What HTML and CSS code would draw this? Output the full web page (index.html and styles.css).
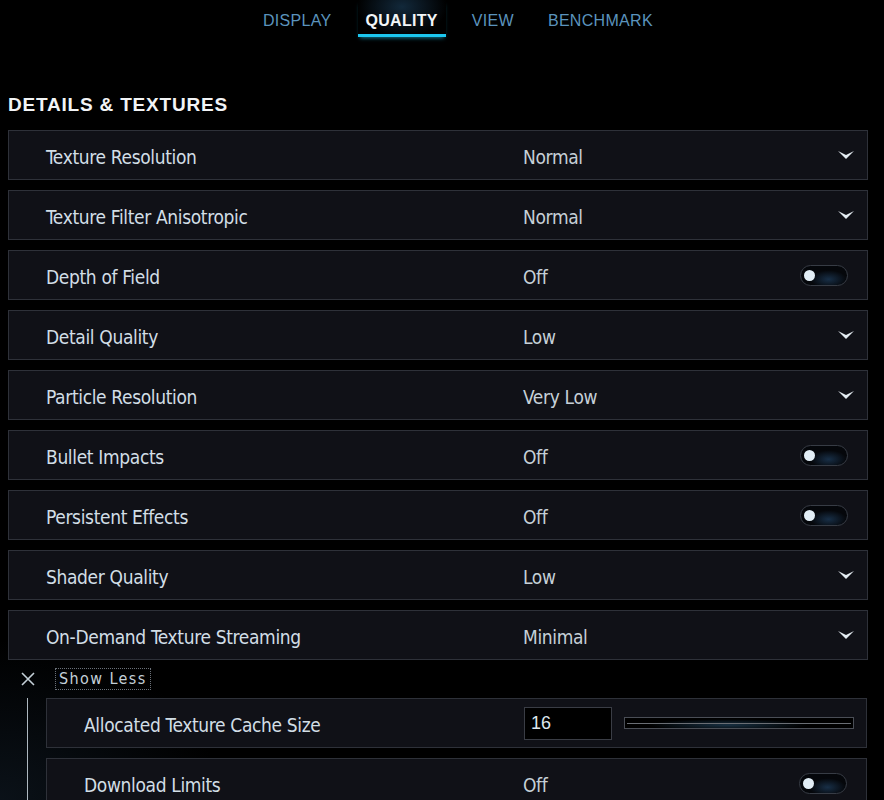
FILE: index.html
```html
<!DOCTYPE html>
<html>
<head>
<meta charset="utf-8">
<link rel="stylesheet" href="styles.css">
</head>
<body>
<div class="page">
  <nav class="tabs">
    <span class="tab">DISPLAY</span>
    <span class="tab active">QUALITY</span>
    <span class="tab">VIEW</span>
    <span class="tab">BENCHMARK</span>
  </nav>

  <h2 class="section-title">DETAILS &amp; TEXTURES</h2>

  <div class="rows">
    <div class="row"><span class="label">Texture Resolution</span><span class="value">Normal</span><span class="ctl"><svg class="chev" width="16" height="8" viewBox="0 0 16 8"><polygon points="0,0 8,4 16,0 8,8" fill="#e4ecf2"/></svg></span></div>
    <div class="row"><span class="label">Texture Filter Anisotropic</span><span class="value">Normal</span><span class="ctl"><svg class="chev" width="16" height="8" viewBox="0 0 16 8"><polygon points="0,0 8,4 16,0 8,8" fill="#e4ecf2"/></svg></span></div>
    <div class="row"><span class="label">Depth of Field</span><span class="value">Off</span><span class="ctl"><span class="toggle"><span class="knob"></span></span></span></div>
    <div class="row"><span class="label">Detail Quality</span><span class="value">Low</span><span class="ctl"><svg class="chev" width="16" height="8" viewBox="0 0 16 8"><polygon points="0,0 8,4 16,0 8,8" fill="#e4ecf2"/></svg></span></div>
    <div class="row"><span class="label">Particle Resolution</span><span class="value">Very Low</span><span class="ctl"><svg class="chev" width="16" height="8" viewBox="0 0 16 8"><polygon points="0,0 8,4 16,0 8,8" fill="#e4ecf2"/></svg></span></div>
    <div class="row"><span class="label">Bullet Impacts</span><span class="value">Off</span><span class="ctl"><span class="toggle"><span class="knob"></span></span></span></div>
    <div class="row"><span class="label">Persistent Effects</span><span class="value">Off</span><span class="ctl"><span class="toggle"><span class="knob"></span></span></span></div>
    <div class="row"><span class="label">Shader Quality</span><span class="value">Low</span><span class="ctl"><svg class="chev" width="16" height="8" viewBox="0 0 16 8"><polygon points="0,0 8,4 16,0 8,8" fill="#e4ecf2"/></svg></span></div>
    <div class="row"><span class="label">On-Demand Texture Streaming</span><span class="value">Minimal</span><span class="ctl"><svg class="chev" width="16" height="8" viewBox="0 0 16 8"><polygon points="0,0 8,4 16,0 8,8" fill="#e4ecf2"/></svg></span></div>
  </div>

  <div class="showless">
    <svg class="close" width="14" height="14" viewBox="0 0 14 14"><path d="M1 1 L13 13 M13 1 L1 13" stroke="#c4d0d8" stroke-width="1.6"/></svg>
    <span class="showless-text">Show Less</span>
  </div>

  <div class="subrows">
    <div class="row sub"><span class="label">Allocated Texture Cache Size</span><span class="value slider-cell"><span class="numbox">16</span><span class="slider"><span class="slider-line"></span></span></span></div>
    <div class="row sub"><span class="label">Download Limits</span><span class="value">Off</span><span class="ctl"><span class="toggle"><span class="knob"></span></span></span></div>
  </div>
</div>
</body>
</html>
```

FILE: styles.css
```css
html, body {
  margin: 0;
  padding: 0;
  background: #000;
  height: 800px;
  overflow: hidden;
}

.page {
  width: 884px;
  height: 800px;
  background:
    radial-gradient(ellipse 220px 160px at 0px 800px, rgba(30, 50, 70, 0.35), rgba(0,0,0,0) 100%),
    #000;
  font-family: "DejaVu Sans Condensed", "Liberation Sans", sans-serif;
  color: #ccd8e0;
}

.tabs {
  display: flex;
  gap: 18px;
  padding-left: 255px;
  height: 40px;
  font-family: "Liberation Sans", sans-serif;
  font-size: 16px;
}

.tab {
  color: #5b93bd;
  padding: 12px 8px 0;
  height: 22px;
  line-height: 18px;
  letter-spacing: 0.3px;
}

.tab.active {
  color: #f2f6f8;
  font-weight: bold;
  border-bottom: 3px solid #1cc6ee;
  box-shadow: 0 3px 4px -2px rgba(28, 198, 238, 0.6);
  background: radial-gradient(ellipse 45px 30px at 50% 20%, rgba(40, 90, 130, 0.45), rgba(0,0,0,0) 100%);
}

.section-title {
  margin: 53px 0 0 8px;
  height: 37px;
  font-family: "Liberation Sans", sans-serif;
  font-size: 19px;
  font-weight: bold;
  letter-spacing: 0.8px;
  color: #f2f4f6;
  line-height: 24px;
}

.rows {
  display: flex;
  flex-direction: column;
  gap: 10px;
  margin-left: 8px;
  width: 860px;
}

.row {
  box-sizing: border-box;
  height: 50px;
  border: 1px solid #2e3139;
  background: #101117;
  display: grid;
  grid-template-columns: 477px 1fr auto;
  align-items: center;
  padding-left: 37px;
  font-size: 19px;
  letter-spacing: -0.35px;
}

.label, .value {
  padding-top: 3px;
}

.label {
  color: #d2dee6;
}

.value {
  color: #c6d0d8;
}

.ctl {
  display: flex;
  align-items: center;
  justify-content: flex-end;
  padding-right: 13px;
}

.chev {
  display: block;
}

.toggle {
  box-sizing: border-box;
  width: 48px;
  height: 21px;
  border: 1.5px solid #373c45;
  border-radius: 11px;
  background: radial-gradient(ellipse 18px 9px at 60% 70%, rgba(40, 80, 120, 0.55), rgba(0,0,0,0) 100%), #05070b;
  display: flex;
  align-items: center;
  padding-left: 3px;
  margin-right: 6px;
}

.knob {
  width: 11px;
  height: 11px;
  border-radius: 50%;
  background: #e2eef6;
}

.showless {
  height: 38px;
  display: flex;
  align-items: center;
  padding-left: 21px;
  gap: 22px;
}

.close {
  display: block;
}

.showless-text {
  font-family: "DejaVu Sans Condensed", "Liberation Sans", sans-serif;
  font-size: 16px;
  letter-spacing: 1.4px;
  color: #c4d0d8;
  outline: 1px dotted #6a7078;
  outline-offset: 1px;
  padding: 0 2px;
  line-height: 18px;
}

.subrows {
  margin-left: 27px;
  border-left: 1px solid #aeb8c0;
  padding-left: 18px;
  display: flex;
  flex-direction: column;
  gap: 10px;
  width: 821px;
}

.row.sub {
  grid-template-columns: 439px 1fr auto;
}

.slider-cell {
  display: flex;
  align-items: center;
  gap: 12px;
  padding-top: 0;
}

.numbox {
  box-sizing: border-box;
  width: 88px;
  height: 33px;
  background: #000;
  border: 1px solid #3a3d45;
  font-family: "Liberation Sans", sans-serif;
  font-size: 18px;
  letter-spacing: 0;
  color: #dde6ec;
  padding-left: 6px;
  line-height: 31px;
  margin-left: 1px;
}

.slider {
  box-sizing: border-box;
  width: 230px;
  height: 12px;
  border: 1px solid #4a4e56;
  background: radial-gradient(ellipse 80px 6px at 45% 70%, rgba(40, 80, 110, 0.6), rgba(0,0,0,0) 100%), #000;
  display: flex;
  align-items: center;
  padding: 0 2px;
}

.slider-line {
  display: block;
  width: 100%;
  height: 1px;
  background: #6a6e74;
}
```
